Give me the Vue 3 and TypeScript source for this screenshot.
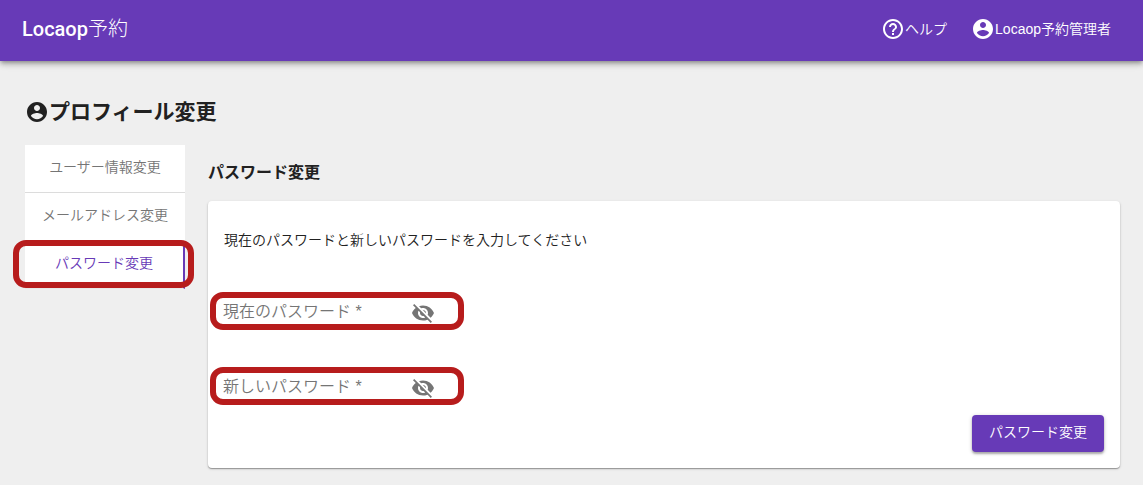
<script setup lang="ts">
import { reactive, ref } from 'vue'

interface PasswordField {
  id: string
  label: string
  value: string
  visible: boolean
}

const tabs: string[] = ['ユーザー情報変更', 'メールアドレス変更', 'パスワード変更']
const activeTab = ref(2)

const fields = reactive<PasswordField[]>([
  { id: 'current-password', label: '現在のパスワード *', value: '', visible: false },
  { id: 'new-password', label: '新しいパスワード *', value: '', visible: false },
])
</script>

<template>
  <div class="page">
    <header class="bar">
      <span class="brand">Locaop<span class="brand-light">予約</span></span>
      <nav class="links">
        <a class="link" href="#help">
          <svg class="icon" viewBox="0 0 24 24" aria-hidden="true">
            <path d="M11 18h2v-2h-2v2zm1-16C6.48 2 2 6.48 2 12s4.48 10 10 10 10-4.48 10-10S17.52 2 12 2zm0 18c-4.41 0-8-3.59-8-8s3.590-8 8-8 8 3.590 8 8-3.590 8-8 8zm0-14c-2.210 0-4 1.790-4 4h2c0-1.100.900-2 2-2s2 .900 2 2c0 2-3 1.750-3 5h2c0-2.250 3-2.500 3-5 0-2.210-1.790-4-4-4z" />
          </svg>
          <span>ヘルプ</span>
        </a>
        <a class="link" href="#account">
          <svg class="icon" viewBox="0 0 24 24" aria-hidden="true">
            <path d="M12 2C6.480 2 2 6.480 2 12s4.480 10 10 10 10-4.480 10-10S17.520 2 12 2zm0 3c1.660 0 3 1.340 3 3s-1.340 3-3 3-3-1.340-3-3 1.340-3 3-3zm0 14.200c-2.500 0-4.710-1.280-6-3.220.030-1.990 4-3.080 6-3.080 1.990 0 5.970 1.090 6 3.080-1.290 1.940-3.500 3.220-6 3.220z" />
          </svg>
          <span>Locaop予約管理者</span>
        </a>
      </nav>
    </header>

    <main class="main">
      <h1 class="title">
        <svg class="icon" viewBox="0 0 24 24" aria-hidden="true">
          <path d="M12 2C6.480 2 2 6.480 2 12s4.480 10 10 10 10-4.480 10-10S17.520 2 12 2zm0 3c1.660 0 3 1.340 3 3s-1.340 3-3 3-3-1.340-3-3 1.340-3 3-3zm0 14.200c-2.500 0-4.710-1.280-6-3.220.030-1.990 4-3.080 6-3.080 1.990 0 5.970 1.090 6 3.080-1.290 1.940-3.500 3.220-6 3.220z" />
        </svg>
        <span>プロフィール変更</span>
      </h1>

      <div class="columns">
        <nav class="tabs">
          <button
            v-for="(tab, i) in tabs"
            :key="tab"
            type="button"
            class="tab"
            :class="{ active: i === activeTab }"
            @click="activeTab = i"
          >
            {{ tab }}
          </button>
        </nav>

        <section class="content">
          <h2 class="subtitle">パスワード変更</h2>
          <form class="card" @submit.prevent>
            <p class="lead">現在のパスワードと新しいパスワードを入力してください</p>
            <div class="fields">
              <div v-for="field in fields" :key="field.id" class="field">
                <div class="entry">
                  <label v-show="!field.value" :for="field.id">{{ field.label }}</label>
                  <input
                    :id="field.id"
                    v-model="field.value"
                    :type="field.visible ? 'text' : 'password'"
                    autocomplete="off"
                    required
                  />
                </div>
                <button
                  type="button"
                  class="toggle"
                  aria-label="パスワードの表示切り替え"
                  @click="field.visible = !field.visible"
                >
                  <svg class="icon" viewBox="0 0 24 24" aria-hidden="true">
                    <path d="M12 7c2.760 0 5 2.240 5 5 0 .650-.130 1.260-.360 1.830l2.920 2.920c1.510-1.260 2.700-2.890 3.430-4.750-1.730-4.390-6-7.500-11-7.500-1.400 0-2.740.250-3.980.700l2.160 2.160C10.740 7.130 11.350 7 12 7zM2 4.270l2.280 2.280.460.460C3.080 8.300 1.780 10.020 1 12c1.730 4.390 6 7.500 11 7.500 1.550 0 3.030-.300 4.380-.840l.420.420L19.730 22 21 20.730 3.270 3 2 4.270zM7.530 9.800l1.550 1.550c-.050.210-.080.430-.080.650 0 1.660 1.340 3 3 3 .220 0 .440-.030.650-.080l1.550 1.550c-.670.330-1.410.530-2.200.530-2.760 0-5-2.240-5-5 0-.790.200-1.530.530-2.200zm4.310-.780l3.150 3.150.020-.160c0-1.660-1.340-3-3-3l-.170.010z" />
                  </svg>
                </button>
              </div>
            </div>
            <div class="actions">
              <button type="submit" class="submit">パスワード変更</button>
            </div>
          </form>
        </section>
      </div>
    </main>
  </div>
</template>

<style>
body {
  margin: 0;
  background: #efefef;
}
</style>

<style scoped>
.page {
  color: #212121;
  font: 350 14px/20px "Liberation Sans", "Noto Sans CJK JP", sans-serif;
}

.bar {
  display: flex;
  align-items: center;
  justify-content: space-between;
  box-sizing: border-box;
  height: 61px;
  padding: 0 32px 4px 22px;
  background: #673ab7;
  color: #fff;
  box-shadow: 0 2px 4px -1px rgba(0, 0, 0, 0.3), 0 4px 5px rgba(0, 0, 0, 0.14), 0 1px 10px rgba(0, 0, 0, 0.12);
}

.brand {
  font: 500 20px/28px Roboto, "Noto Sans CJK JP", sans-serif;
}

.brand-light {
  font-weight: 300;
}

.links {
  display: flex;
  gap: 24px;
}

.link {
  display: flex;
  align-items: center;
  color: inherit;
  text-decoration: none;
}

.icon {
  display: block;
  flex: none;
  width: 24px;
  height: 24px;
  fill: currentColor;
}

.main {
  padding: 36px 23px 16px 25px;
}

.title {
  display: flex;
  align-items: center;
  margin: 0;
  font-size: 21px;
  line-height: 30px;
  font-weight: 700;
}

.columns {
  display: flex;
  align-items: flex-start;
  gap: 23px;
  padding-top: 18px;
}

.tabs {
  display: flex;
  flex: none;
  flex-direction: column;
  width: 160px;
}

.tab {
  position: relative;
  height: 48px;
  padding: 0 0 3px;
  border: 0;
  border-bottom: 1px solid #dcdcdc;
  background: #fff;
  color: #757575;
  font: inherit;
  cursor: pointer;
}

.tab:nth-child(2) {
  border-bottom-color: #fff;
}

.tab.active {
  border-right: 2px solid #673ab7;
  border-bottom-color: #e8e8e8;
  color: #673ab7;
}

.tab.active::after {
  content: "";
  position: absolute;
  inset: -1px -11px 0 -12px;
  border: 6px solid #b71c1c;
  border-radius: 13px;
}

.content {
  flex: 1;
  min-width: 0;
  padding-top: 15px;
}

.subtitle {
  margin: 0 0 15px;
  font-size: 16px;
  line-height: 26px;
  font-weight: 700;
}

.card {
  padding: 29px 16px 16px;
  border-radius: 4px;
  background: #fff;
  box-shadow: 0 1px 1px rgba(0, 0, 0, 0.3), 0 1px 3px rgba(0, 0, 0, 0.16);
}

.lead {
  margin: 0 0 42px;
}

.fields {
  display: flex;
  flex-direction: column;
  gap: 37px;
  margin-left: -14px;
}

.field {
  display: flex;
  align-items: center;
  box-sizing: border-box;
  width: 254px;
  height: 38px;
  padding: 2px 23px 0 7px;
  border: 6px solid #b71c1c;
  border-radius: 13px;
  color: #757575;
}

.entry {
  position: relative;
  flex: 1;
  min-width: 0;
}

.entry label {
  position: absolute;
  inset: 0;
  font-size: 16px;
  line-height: 24px;
  pointer-events: none;
}

.entry input {
  display: block;
  box-sizing: border-box;
  width: 100%;
  height: 24px;
  padding: 0;
  border: 0;
  outline: 0;
  background: transparent;
  color: #212121;
  font: inherit;
}

.toggle {
  flex: none;
  padding: 2px 0 0;
  border: 0;
  background: none;
  color: inherit;
  cursor: pointer;
}

.actions {
  display: flex;
  justify-content: flex-end;
  padding-top: 10px;
}

.submit {
  height: 37px;
  padding: 0 17px 3px;
  border: 0;
  border-radius: 4px;
  background: #673ab7;
  color: #fff;
  font: inherit;
  box-shadow: 0 2px 2px rgba(0, 0, 0, 0.24), 0 1px 4px rgba(0, 0, 0, 0.2);
  cursor: pointer;
}
</style>
